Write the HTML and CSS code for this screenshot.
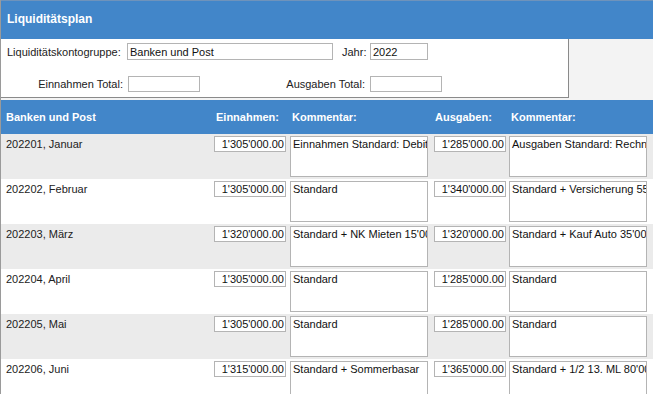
FILE: index.html
```
<!DOCTYPE html>
<html lang="de">
<head>
<meta charset="utf-8">
<title>Liquiditätsplan</title>
<link rel="stylesheet" href="styles.css">
</head>
<body>
<div class="page">
  <div class="titlebar">Liquiditätsplan</div>
  <div class="filter">
    <div class="frow frow-top">
      <label class="lbl lbl-group">Liquiditätskontogruppe:</label>
      <input class="fin in-group" value="Banken und Post">
      <label class="lbl lbl-jahr">Jahr:</label>
      <input class="fin in-jahr" value="2022">
    </div>
    <div class="frow frow-bottom">
      <label class="lbl lbl-ein">Einnahmen Total:</label>
      <input class="fin in-total">
      <label class="lbl lbl-aus">Ausgaben Total:</label>
      <input class="fin in-total">
    </div>
  </div>
  <div class="plan">
    <div class="prow phead">
      <div class="h h-name">Banken und Post</div>
      <div class="h h-ein">Einnahmen:</div>
      <div class="h h-k1">Kommentar:</div>
      <div class="h h-aus">Ausgaben:</div>
      <div class="h h-k2">Kommentar:</div>
    </div>
    <div class="prow odd">
      <div class="name">202201, Januar</div>
      <input class="amt" value="1'305'000.00">
      <textarea class="kom">Einnahmen Standard: Debitoren</textarea>
      <input class="amt" value="1'285'000.00">
      <textarea class="kom">Ausgaben Standard: Rechnungen</textarea>
    </div>
    <div class="prow even">
      <div class="name">202202, Februar</div>
      <input class="amt" value="1'305'000.00">
      <textarea class="kom">Standard</textarea>
      <input class="amt" value="1'340'000.00">
      <textarea class="kom">Standard + Versicherung 55'000</textarea>
    </div>
    <div class="prow odd">
      <div class="name">202203, März</div>
      <input class="amt" value="1'320'000.00">
      <textarea class="kom">Standard + NK Mieten 15'000</textarea>
      <input class="amt" value="1'320'000.00">
      <textarea class="kom">Standard + Kauf Auto 35'000</textarea>
    </div>
    <div class="prow even">
      <div class="name">202204, April</div>
      <input class="amt" value="1'305'000.00">
      <textarea class="kom">Standard</textarea>
      <input class="amt" value="1'285'000.00">
      <textarea class="kom">Standard</textarea>
    </div>
    <div class="prow odd">
      <div class="name">202205, Mai</div>
      <input class="amt" value="1'305'000.00">
      <textarea class="kom">Standard</textarea>
      <input class="amt" value="1'285'000.00">
      <textarea class="kom">Standard</textarea>
    </div>
    <div class="prow even">
      <div class="name">202206, Juni</div>
      <input class="amt" value="1'315'000.00">
      <textarea class="kom">Standard + Sommerbasar</textarea>
      <input class="amt" value="1'365'000.00">
      <textarea class="kom">Standard + 1/2 13. ML 80'000</textarea>
    </div>
  </div>
</div>
</body>
</html>
```
FILE: styles.css
```
* { box-sizing: border-box; }
html, body { margin: 0; padding: 0; }
body {
  background: #f3f3f3;
  font-family: "Liberation Sans", Arial, sans-serif;
  font-size: 11px;
  color: #222;
  overflow: hidden;
}
.page {
  border-left: 1px solid #9a9a9a;
  min-height: 394px;
}
.titlebar {
  height: 39px;
  border-top: 1px solid #6f93bb;
  background: #4286c9;
  color: #fff;
  font-weight: bold;
  font-size: 12px;
  line-height: 37px;
  padding-left: 6px;
}
.filter {
  width: 568px;
  height: 59px;
  background: #fff;
  border-right: 1px solid #8a8a8a;
  border-bottom: 1px solid #8a8a8a;
  padding-top: 4px;
}
.frow {
  display: flex;
  align-items: center;
}
.frow-top { height: 17px; }
.frow-bottom { height: 16px; margin-top: 16px; }
.lbl { color: #222; white-space: nowrap; }
.lbl-group { margin-left: 6px; width: 120px; }
.lbl-jahr { margin-left: 9px; width: 28px; }
.lbl-ein { width: 127px; text-align: right; padding-right: 5px; }
.lbl-aus { width: 170px; text-align: right; padding-right: 5px; }
.fin {
  font-family: "Liberation Sans", Arial, sans-serif;
  font-size: 11px;
  color: #111;
  border: 1px solid #b4b4b4;
  background: #fff;
  padding: 0 2px;
  margin: 0;
  outline: none;
}
.in-group { width: 206px; height: 17px; }
.in-jahr { width: 58px; height: 17px; }
.in-total { width: 72px; height: 16px; }
.plan { margin-top: 2px; }
.prow {
  display: grid;
  grid-template-columns: 213px 76px 144px 75px 144px;
  align-items: start;
}
.phead {
  height: 34px;
  background: #4286c9;
  color: #fff;
  font-weight: bold;
  align-items: center;
}
.h-name { padding-left: 5px; }
.h-ein { padding-left: 2px; }
.h-k1 { padding-left: 2px; }
.h-aus { padding-left: 1px; }
.h-k2 { padding-left: 2px; }
.prow.odd, .prow.even {
  height: 45px;
  padding-top: 2px;
}
.odd { background: #ebebeb; }
.even { background: #fff; }
.name {
  padding-left: 5px;
  padding-top: 2px;
  color: #222;
  white-space: nowrap;
}
.amt {
  width: 72px;
  height: 16px;
  border: 1px solid #b4b4b4;
  background: #fff;
  margin: 0;
  padding: 0 1px 0 2px;
  text-align: right;
  font-family: "Liberation Sans", Arial, sans-serif;
  font-size: 11px;
  color: #111;
  outline: none;
}
.kom {
  width: 138px;
  height: 41px;
  border: 1px solid #b4b4b4;
  background: #fff;
  margin: 0;
  padding: 1px 2px;
  resize: none;
  overflow: hidden;
  white-space: pre;
  font-family: "Liberation Sans", Arial, sans-serif;
  font-size: 11px;
  line-height: 13px;
  color: #111;
  outline: none;
}
```
